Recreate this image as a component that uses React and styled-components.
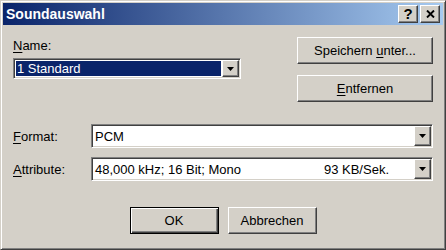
import React from "react";
import styled, { createGlobalStyle, css } from "styled-components";

const GlobalStyle = createGlobalStyle`
  html, body { margin: 0; padding: 0; background: #d4d0c8; }
  body { font-family: "Liberation Sans", Arial, sans-serif; font-size: 13px; color: #000; }
  * { box-sizing: border-box; }
`;

const raised = css`
  border: 1px solid;
  border-color: #ffffff #404040 #404040 #ffffff;
  box-shadow: inset -1px -1px #808080, inset 1px 1px #d4d0c8;
`;

const Window = styled.div`
  width: 446px;
  height: 250px;
  background: #d4d0c8;
  border: 1px solid;
  border-color: #d4d0c8 #404040 #404040 #d4d0c8;
  box-shadow: inset 1px 1px #ffffff, inset -1px -1px #808080;
  padding: 2px;
  display: flex;
  flex-direction: column;
`;

const TitleBar = styled.div`
  height: 22px;
  flex: none;
  display: flex;
  align-items: center;
  padding: 0 3px 0 3px;
  background: linear-gradient(to right, #0a246a, #a6caf0);
`;

const TitleText = styled.div`
  flex: 1;
  color: #ffffff;
  font-weight: bold;
  font-size: 14px;
  line-height: 16px;
`;

const TitleButtons = styled.div`
  display: flex;
  gap: 2px;
`;

const TitleButton = styled.div`
  ${raised};
  width: 20px;
  height: 18px;
  background: #d4d0c8;
  display: flex;
  align-items: center;
  justify-content: center;
  font-weight: bold;
  font-size: 15px;
  line-height: 16px;
  color: #000;
`;

const Body = styled.div`
  flex: 1;
  display: flex;
  flex-direction: column;
  padding: 12px 10px 0 10px;
`;

const TopSection = styled.div`
  display: flex;
  justify-content: space-between;
  align-items: flex-start;
`;

const LeftCol = styled.div`
  width: 228px;
  margin-top: 1px;
  display: flex;
  flex-direction: column;
  gap: 5px;
`;

const RightCol = styled.div`
  width: 136px;
  display: flex;
  flex-direction: column;
  gap: 11px;
`;

const Label = styled.div`
  line-height: 15px;
  width: ${(p) => (p.$w ? `${p.$w}px` : "auto")};
  flex: none;
`;

const Key = styled.span`
  text-decoration: underline;
  text-underline-offset: 2px;
`;

const Button = styled.div`
  ${raised};
  height: 27px;
  width: ${(p) => (p.$w ? `${p.$w}px` : "100%")};
  background: #d4d0c8;
  display: flex;
  align-items: center;
  justify-content: center;
  line-height: 15px;
  ${(p) =>
    p.$default &&
    css`
      border-color: #000000;
      box-shadow: inset 1px 1px #ffffff, inset -1px -1px #404040,
        inset -2px -2px #808080;
    `}
`;

const FieldRow = styled.div`
  display: flex;
  align-items: center;
  margin-top: ${(p) => p.$mt}px;
`;

const Combo = styled.div`
  flex: 1;
  height: ${(p) => p.$h}px;
  display: flex;
  background: #ffffff;
  border: 1px solid;
  border-color: #808080 #ffffff #ffffff #808080;
  box-shadow: inset 1px 1px #404040, inset -1px -1px #d4d0c8;
  padding: 1px;
`;

const ComboValue = styled.div`
  flex: 1;
  display: flex;
  align-items: center;
  justify-content: space-between;
  line-height: 15px;
  white-space: nowrap;
  padding: 0 ${(p) => p.$pr || 0}px 0 2px;
  ${(p) =>
    p.$selected &&
    css`
      margin: 1px 1px 1px 1px;
      padding-left: 1px;
      background: #0a246a;
      color: #ffffff;
    `}
`;

const DropButton = styled.div`
  ${raised};
  width: 17px;
  flex: none;
  background: #d4d0c8;
  display: flex;
  align-items: center;
  justify-content: center;
`;

const ButtonRow = styled.div`
  display: flex;
  justify-content: center;
  gap: 9px;
  margin-top: 26px;
`;

function Arrow() {
  return (
    <svg width="7" height="4" viewBox="0 0 7 4" style={{ display: "block" }}>
      <polygon points="0,0 7,0 3.5,4" fill="#000" />
    </svg>
  );
}

function ComboBox({ h, selected, pr, children }) {
  return (
    <Combo $h={h}>
      <ComboValue $selected={selected} $pr={pr}>
        {children}
      </ComboValue>
      <DropButton>
        <Arrow />
      </DropButton>
    </Combo>
  );
}

export default function App() {
  return (
    <>
      <GlobalStyle />
      <Window>
        <TitleBar>
          <TitleText>Soundauswahl</TitleText>
          <TitleButtons>
            <TitleButton>?</TitleButton>
            <TitleButton>
              <svg width="9" height="8" viewBox="0 0 9 8">
                <path d="M1 0.5 L8 7.5 M8 0.5 L1 7.5" stroke="#000" strokeWidth="1.9" />
              </svg>
            </TitleButton>
          </TitleButtons>
        </TitleBar>
        <Body>
          <TopSection>
            <LeftCol>
              <Label>
                <Key>N</Key>ame:
              </Label>
              <ComboBox h={22} selected>
                <span>1 Standard</span>
              </ComboBox>
            </LeftCol>
            <RightCol>
              <Button>
                <span>
                  Speichern <Key>u</Key>nter...
                </span>
              </Button>
              <Button>
                <span>
                  <Key>E</Key>ntfernen
                </span>
              </Button>
            </RightCol>
          </TopSection>
          <FieldRow $mt={22}>
            <Label $w={78}>
              <Key>F</Key>ormat:
            </Label>
            <ComboBox h={24}>
              <span>PCM</span>
            </ComboBox>
          </FieldRow>
          <FieldRow $mt={9}>
            <Label $w={78}>
              <Key>A</Key>ttribute:
            </Label>
            <ComboBox h={24} pr={25}>
              <span>48,000 kHz; 16 Bit; Mono</span>
              <span>93 KB/Sek.</span>
            </ComboBox>
          </FieldRow>
          <ButtonRow>
            <Button $w={89} $default>
              OK
            </Button>
            <Button $w={89}>Abbrechen</Button>
          </ButtonRow>
        </Body>
      </Window>
    </>
  );
}
